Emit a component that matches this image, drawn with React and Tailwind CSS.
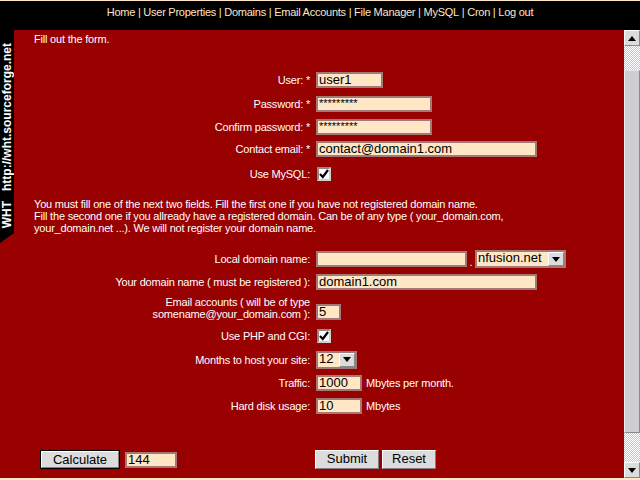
import React from 'react';

const font = "font-['Liberation_Sans',Arial,sans-serif]";

const Field = ({ value = '', w, stars }) => (
  <div
    className={`h-[16px] ${w} border-2 border-[#a47878] bg-[#ffe6c4] pl-[1px] overflow-hidden text-black tracking-normal ${
      stars ? 'text-[11px] leading-[11px]' : 'text-[13px] leading-[12px]'
    }`}
  >
    {value}
  </div>
);

const Check = () => (
  <div className="w-[14px] h-[14px] bg-white border-2 border-t-[#8c8c8c] border-l-[#8c8c8c] border-r-[#d0d0d0] border-b-[#d0d0d0] flex items-center justify-center">
    <svg width="10" height="10" viewBox="0 0 10 10">
      <path d="M1 5 L3.8 8 L9 1" stroke="#000" strokeWidth="2.2" fill="none" />
    </svg>
  </div>
);

const Arrow = ({ up }) => (
  <svg width="8" height="5" viewBox="0 0 8 5">
    <path d={up ? 'M0 5 L4 0 L8 5 Z' : 'M0 0 L8 0 L4 5 Z'} fill="#000" />
  </svg>
);

const Select = ({ value, w }) => (
  <div className={`h-[18px] ${w} flex border-2 border-[#a47878] bg-[#ffe6c4]`}>
    <div className="flex-1 text-[13px] leading-[12px] pl-[1px] text-black tracking-normal">{value}</div>
    <div className="w-[16px] bg-[#dcdcdc] border border-t-white border-l-white border-r-[#888] border-b-[#888] flex items-center justify-center">
      <Arrow />
    </div>
  </div>
);

const Row = ({ label, className = '', children, end }) => (
  <div className={`flex ${end ? 'items-end' : 'items-center'} ${className}`}>
    <div className="w-[282px] pr-[6px] text-right leading-[12px]">{label}</div>
    <div className="flex items-center">{children}</div>
  </div>
);

const Button = ({ children, w, focused }) => (
  <div className={`${focused ? 'border border-black' : ''}`}>
    <div
      className={`${w} ${focused ? 'h-[17px]' : 'h-[19px]'} bg-[#dcdcdc] border border-t-white border-l-white border-r-[#808080] border-b-[#808080] text-black text-[13px] leading-[15px] text-center tracking-normal`}
    >
      {children}
    </div>
  </div>
);

const Scrollbar = () => (
  <div className="w-[16px] flex flex-col bg-[image:repeating-conic-gradient(#c8c8c8_0_25%,#ffffff_0_50%)] bg-[length:2px_2px]">
    <div className="h-[16px] bg-[#dcdcdc] border border-t-white border-l-white border-r-[#888] border-b-[#888] flex items-center justify-center">
      <Arrow up />
    </div>
    <div className="h-[24px]" />
    <div className="h-[363px] bg-[#cdcdd2] border border-t-[#e6e6ea] border-l-[#f0f0f0] border-r-[#8a8a8a] border-b-[#8a8a8a]" />
    <div className="flex-1" />
    <div className="h-[16px] bg-[#dcdcdc] border border-t-white border-l-white border-r-[#888] border-b-[#888] flex items-center justify-center">
      <Arrow />
    </div>
  </div>
);

const links = ['Home', 'User Properties', 'Domains', 'Email Accounts', 'File Manager', 'MySQL', 'Cron', 'Log out'];

export default function App() {
  return (
    <div className={`w-[640px] h-[480px] bg-[#ffe6c4] flex flex-col overflow-hidden ${font}`}>
      <div className="h-[1px]" />
      <nav className="h-[29px] bg-black flex justify-center pt-[5px] text-[#ffe6c4] text-[11px] leading-[13px] tracking-[-0.25px]">
        {links.map((l, i) => (
          <span key={l} className="whitespace-pre">
            {i > 0 ? ' | ' : ''}
            {l}
          </span>
        ))}
      </nav>

      <div className="flex h-[448px]">
        <aside className="w-[14px] bg-[#990000]">
          <div className="h-[213px] bg-black [clip-path:polygon(0_0,100%_0,100%_203px,0_100%)] flex flex-col justify-end items-center pb-[15px]">
            <span className="[writing-mode:vertical-rl] rotate-180 text-white font-bold text-[12px] leading-[14px] whitespace-pre">
              {'WHT   http://wht.sourceforge.net'}
            </span>
          </div>
        </aside>

        <main className="flex-1 bg-[#990000] text-white text-[11px] tracking-[-0.2px] pl-[20px] pt-[3px]">
          <p className="leading-[13px]">Fill out the form.</p>

          <Row label="User: *" className="mt-[26px] h-[16px]">
            <Field value="user1" w="w-[67px]" />
          </Row>
          <Row label="Password: *" className="mt-[8px] h-[16px]">
            <Field value="*********" w="w-[116px]" stars />
          </Row>
          <Row label="Confirm password: *" className="mt-[7px] h-[16px]">
            <Field value="*********" w="w-[116px]" stars />
          </Row>
          <Row label="Contact email: *" className="mt-[6px] h-[16px]">
            <Field value="contact@domain1.com" w="w-[221px]" />
          </Row>
          <Row label="Use MySQL:" className="mt-[10px] h-[14px]">
            <div className="pl-[1px]">
              <Check />
            </div>
          </Row>

          <p className="mt-[17px] leading-[12px]">
            You must fill one of the next two fields. Fill the first one if you have not registered domain name.
            <br />
            Fill the second one if you allready have a registered domain. Can be of any type ( your_domain.com,
            <br />
            your_domain.net ...). We will not register your domain name.
          </p>

          <Row label="Local domain name:" className="mt-[16px] h-[18px]">
            <Field w="w-[151px]" />
            <span className="w-[8px] text-center self-end leading-[12px]">.</span>
            <Select value="nfusion.net" w="w-[91px]" />
          </Row>
          <Row label="Your domain name ( must be registered ):" className="mt-[6px] h-[16px]">
            <Field value="domain1.com" w="w-[221px]" />
          </Row>
          <Row
            end
            label={
              <>
                Email accounts ( will be of type
                <br />
                somename@your_domain.com ):
              </>
            }
            className="mt-[6px]"
          >
            <Field value="5" w="w-[25px]" />
          </Row>
          <Row label="Use PHP and CGI:" className="mt-[9px] h-[14px]">
            <div className="pl-[1px]">
              <Check />
            </div>
          </Row>
          <Row label="Months to host your site:" className="mt-[8px] h-[17px]">
            <Select value="12" w="w-[41px]" />
          </Row>
          <Row label="Traffic:" className="mt-[7px] h-[16px]">
            <Field value="1000" w="w-[46px]" />
            <span className="ml-[4px]">Mbytes per month.</span>
          </Row>
          <Row label="Hard disk usage:" className="mt-[7px] h-[16px]">
            <Field value="10" w="w-[46px]" />
            <span className="ml-[4px]">Mbytes</span>
          </Row>

          <div className="mt-[36px] flex items-center h-[19px]">
            <div className="ml-[6px]">
              <Button w="w-[78px]" focused>
                Calculate
              </Button>
            </div>
            <div className="ml-[5px]">
              <Field value="144" w="w-[52px]" />
            </div>
            <div className="ml-[138px]">
              <Button w="w-[64px]">Submit</Button>
            </div>
            <div className="ml-[3px]">
              <Button w="w-[54px]">Reset</Button>
            </div>
          </div>
        </main>

        <Scrollbar />
      </div>
    </div>
  );
}
